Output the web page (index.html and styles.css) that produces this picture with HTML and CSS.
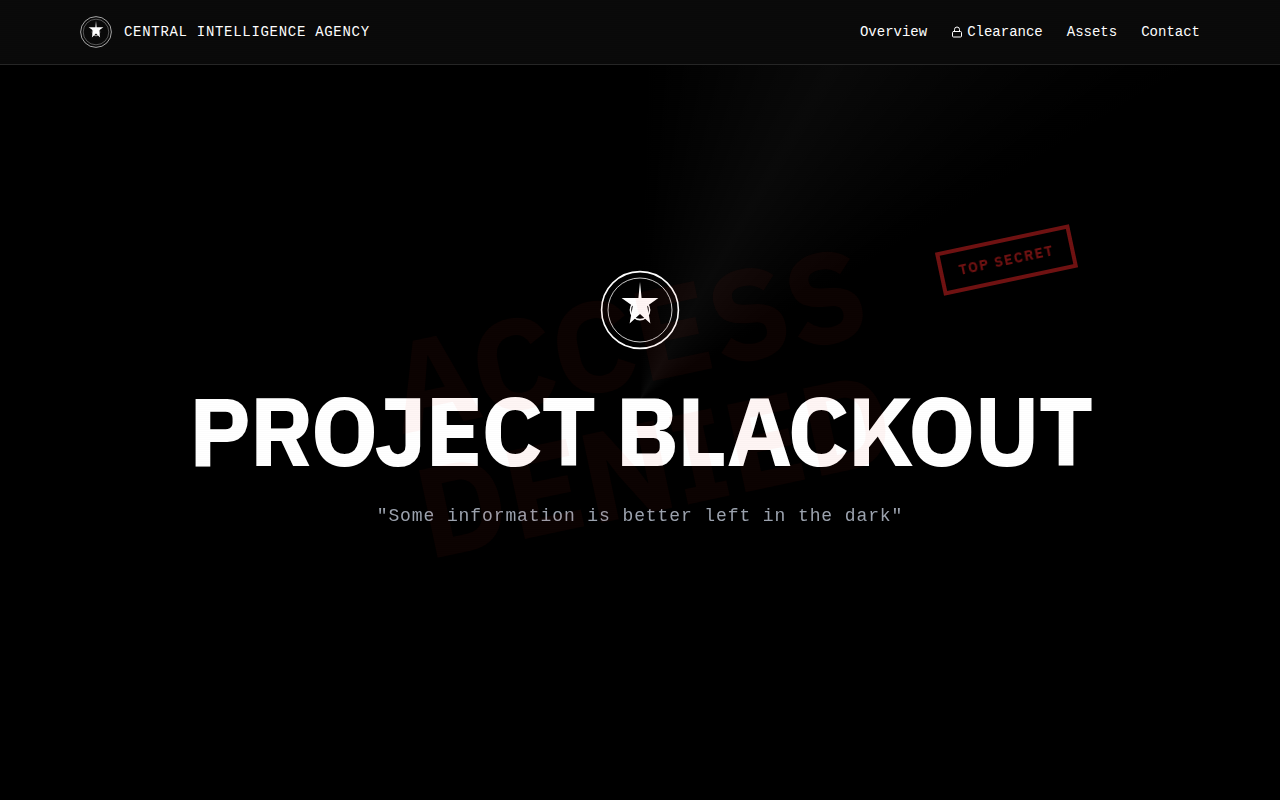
FILE: index.html
```html
<!DOCTYPE html>
<html lang="en">
<head>
    <meta charset="UTF-8">
    <meta name="viewport" content="width=device-width, initial-scale=1.0">
    <title>Project Blackout</title>
    <link rel="stylesheet" href="styles.css">
</head>
<body>
    <header class="header">
        <div class="header-inner">
            <a href="#" class="brand">
                <svg class="brand-seal" viewBox="0 0 100 100" fill="none" stroke="currentColor" aria-hidden="true">
                    <circle cx="50" cy="50" r="48" stroke-width="2"/>
                    <circle cx="50" cy="50" r="40" stroke-width="1"/>
                    <path d="M50 15 L52 35 L73 35 L59 45 L63 67 L50 55 L37 67 L41 45 L27 35 L48 35 Z" fill="currentColor" stroke="none"/>
                    <circle cx="50" cy="50" r="12" stroke-width="2"/>
                </svg>
                <span class="brand-name">CENTRAL INTELLIGENCE AGENCY</span>
            </a>
            <nav class="nav">
                <a href="#overview">Overview</a>
                <a href="#clearance">
                    <svg class="lock" viewBox="0 0 24 24" fill="none" stroke="currentColor" stroke-width="2" stroke-linecap="round" stroke-linejoin="round" aria-hidden="true">
                        <rect x="3" y="11" width="18" height="11" rx="2"/>
                        <path d="M7 11V7a5 5 0 0 1 10 0v4"/>
                    </svg>
                    Clearance
                </a>
                <a href="#assets">Assets</a>
                <a href="#contact">Contact</a>
            </nav>
        </div>
    </header>

    <main class="hero" id="overview">
        <div class="spotlight"></div>
        <div class="hero-content">
            <svg class="hero-seal" viewBox="0 0 100 100" fill="none" stroke="currentColor" aria-hidden="true">
                <circle cx="50" cy="50" r="48" stroke-width="2"/>
                <circle cx="50" cy="50" r="40" stroke-width="1"/>
                <path d="M50 15 L52 35 L73 35 L59 45 L63 67 L50 55 L37 67 L41 45 L27 35 L48 35 Z" fill="currentColor" stroke="none"/>
                <circle cx="50" cy="50" r="12" stroke-width="2"/>
            </svg>
            <h1 class="title">PROJECT BLACKOUT</h1>
            <p class="tagline">"Some information is better left in the dark"</p>
        </div>
        <div class="stamp">TOP SECRET</div>
        <div class="denied"><span>ACCESS<br>DENIED</span></div>
    </main>
    <div class="scanlines"></div>
</body>
</html>
```
FILE: styles.css
```css
* {
    box-sizing: border-box;
    margin: 0;
    padding: 0;
}

body {
    display: flex;
    flex-direction: column;
    min-height: 100vh;
    background: #000;
    color: #fff;
    font-family: "Liberation Mono", monospace;
}

/* header */
.header {
    position: relative;
    z-index: 10;
    background: #0a0a0a;
    border-bottom: 1px solid #262626;
}

.header-inner {
    display: flex;
    align-items: center;
    justify-content: space-between;
    height: 64px;
    padding: 0 80px;
}

.brand {
    display: flex;
    align-items: center;
    gap: 12px;
    color: #fff;
    text-decoration: none;
}

.brand-seal {
    width: 32px;
    height: 32px;
}

.brand-name {
    font-size: 14px;
    line-height: 20px;
    letter-spacing: 0.05em;
}

.nav {
    display: flex;
    gap: 24px;
}

.nav a {
    display: flex;
    align-items: center;
    gap: 4px;
    color: #fff;
    font-size: 14px;
    line-height: 20px;
    text-decoration: none;
}

.lock {
    width: 12px;
    height: 12px;
}

/* hero */
.hero {
    position: relative;
    flex: 1;
    display: flex;
    align-items: center;
    justify-content: center;
    padding-bottom: 65px;
    overflow: hidden;
}

/* thin beam fanning out from the middle of the window */
.spotlight {
    position: fixed;
    inset: 0;
    background: conic-gradient(from 0deg at 50% 50%, transparent 0deg, rgba(255, 255, 255, 0.04) 30deg, transparent 60deg);
}

.hero-content {
    position: relative;
    display: flex;
    flex-direction: column;
    align-items: center;
    text-align: center;
}

.hero-seal {
    width: 80px;
    height: 80px;
    margin-bottom: 32px;
}

.title {
    margin-bottom: 24px;
    font-family: "IBM Plex Sans", Inter, sans-serif;
    font-size: 96px;
    font-weight: 700;
    line-height: 96px;
    letter-spacing: -0.025em;
}

.tagline {
    color: #9ca3af;
    font-size: 18px;
    line-height: 28px;
    letter-spacing: 0.05em;
}

.stamp {
    position: absolute;
    top: 173px;
    right: 16%;
    padding: 8px 16px;
    border: 4px solid #701212;
    color: #701212;
    font-family: "IBM Plex Sans", Inter, sans-serif;
    font-size: 14px;
    font-weight: 700;
    line-height: 20px;
    letter-spacing: 0.1em;
    transform: rotate(-12deg);
}

.denied {
    position: fixed;
    inset: 0;
    display: flex;
    align-items: center;
    justify-content: center;
    color: rgba(239, 50, 40, 0.05);
    font-family: "IBM Plex Sans", Inter, sans-serif;
    font-size: 128px;
    font-weight: 700;
    line-height: 128px;
    text-align: center;
    pointer-events: none;
}

.denied span {
    transform: rotate(-12deg);
}

.scanlines {
    position: fixed;
    inset: 0;
    z-index: 20;
    background: repeating-linear-gradient(0deg, rgba(0, 0, 0, 0.01) 0, rgba(0, 0, 0, 0.01) 1px, transparent 1px, transparent 2px);
    pointer-events: none;
}
```
